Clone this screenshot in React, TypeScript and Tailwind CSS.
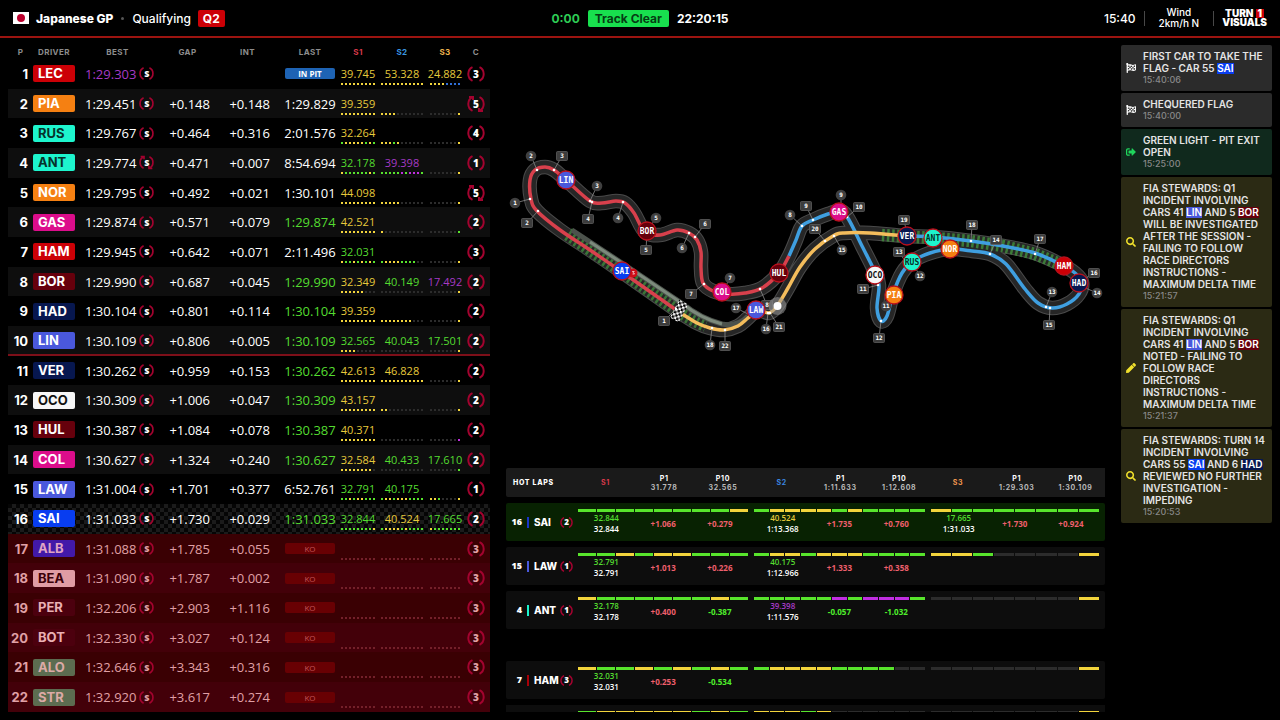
import React from 'react';
import { FaFlagCheckered, FaPen, FaSearch, FaSignOutAlt } from 'react-icons/fa';

type Point = [number, number];

const teamPill: Record<string, string> = {
  LEC: 'bg-[#cc0006] text-white',
  HAM: 'bg-[#cc0006] text-white',
  PIA: 'bg-[#f58012] text-white',
  NOR: 'bg-[#f58012] text-white',
  RUS: 'bg-[#1df5cd] text-[#06332b]',
  ANT: 'bg-[#1df5cd] text-[#06332b]',
  GAS: 'bg-[#dc0d8b] text-white',
  COL: 'bg-[#dc0d8b] text-white',
  BOR: 'bg-[#66000c] text-white',
  HUL: 'bg-[#66000c] text-white',
  HAD: 'bg-[#07174f] text-white',
  VER: 'bg-[#07174f] text-white',
  LIN: 'bg-[#4a58dc] text-white',
  LAW: 'bg-[#4a58dc] text-white',
  OCO: 'bg-[#f7f7f7] text-[#111]',
  SAI: 'bg-[#083df0] text-white',
  ALB: 'bg-[#4219a8] text-[#dfa3c4]',
  BEA: 'bg-[#e09ca4] text-[#3c0008]',
  PER: 'bg-[#4c000e] text-[#eab0b4]',
  BOT: 'bg-[#4c000e] text-[#eab0b4]',
  ALO: 'bg-[#5c6c50] text-[#dcaaa6]',
  STR: 'bg-[#5c6c50] text-[#dcaaa6]'
};

const dotColor: Record<string, string> = {
  y: 'bg-[#f2d43c]',
  g: 'bg-[#58e42c]',
  p: 'bg-[#c02ee0]',
  b: 'bg-[#2f6fd8]',
  '-': 'bg-[#2c2c2c]',
  k: 'bg-[#74202a]'
};

const timeColor: Record<string, string> = {
  y: 'text-[#e6ca3c]',
  g: 'text-[#54dc30]',
  p: 'text-[#a63ac6]',
  w: 'text-white'
};

const none = ['---------', '-----------', '-------y'];

// sectors: colour letter followed by the time; dots: one letter per mini sector
const drivers = [
  { code: 'LEC', best: '1:29.303', gap: '', int: '', last: 'PIT', sectors: ['y39.745', 'y53.328', 'y24.882'], dots: ['yyyyyyyyy', 'yyyyyyyyyyy', 'yyyybbbb'], stint: 3 },
  { code: 'PIA', best: '1:29.451', gap: '+0.148', int: '+0.148', last: 'w1:29.829', sectors: ['y39.359', '', ''], dots: ['yyyyyyyyy', 'yyyy-------', '-------y'], stint: 5, worn: true },
  { code: 'RUS', best: '1:29.767', gap: '+0.464', int: '+0.316', last: 'w2:01.576', sectors: ['y32.264', '', ''], dots: ['gyyyyygyg', 'yyygy------', '-------y'], stint: 4 },
  { code: 'ANT', best: '1:29.774', gap: '+0.471', int: '+0.007', last: 'w8:54.694', sectors: ['g32.178', 'p39.398', ''], dots: ['yggggggyg', 'gggggpgpppg', '-------y'], stint: 1, bestWorn: true },
  { code: 'NOR', best: '1:29.795', gap: '+0.492', int: '+0.021', last: 'w1:30.101', sectors: ['y44.098', '', ''], dots: ['yyyyyyyyy', 'yyyyy------', '-------y'], stint: 5, worn: true },
  { code: 'GAS', best: '1:29.874', gap: '+0.571', int: '+0.079', last: 'g1:29.874', sectors: ['y42.521', '', ''], dots: ['yyyyyyyyy', 'y----------', '-------g'], stint: 2 },
  { code: 'HAM', best: '1:29.945', gap: '+0.642', int: '+0.071', last: 'w2:11.496', sectors: ['g32.031', '', ''], dots: ['yggygygyg', 'gyyyygggg--', '-------y'], stint: 3 },
  { code: 'BOR', best: '1:29.990', gap: '+0.687', int: '+0.045', last: 'g1:29.990', sectors: ['y32.349', 'g40.149', 'p17.492'], dots: ['yyyyyy---', '-----------', '-------y'], stint: 2 },
  { code: 'HAD', best: '1:30.104', gap: '+0.801', int: '+0.114', last: 'g1:30.104', sectors: ['y39.359', '', ''], dots: ['yyyyyyyyy', 'yyyyyyyy---', '-------y'], stint: 2 },
  { code: 'LIN', best: '1:30.109', gap: '+0.806', int: '+0.005', last: 'g1:30.109', sectors: ['g32.565', 'g40.043', 'g17.501'], dots: ['yyyy-----', '-----------', '-------y'], stint: 2 },
  { code: 'VER', best: '1:30.262', gap: '+0.959', int: '+0.153', last: 'g1:30.262', sectors: ['y42.613', 'y46.828', ''], dots: ['yyyyyyyyy', 'yyyyyyyyyyy', '-------y'], stint: 2 },
  { code: 'OCO', best: '1:30.309', gap: '+1.006', int: '+0.047', last: 'g1:30.309', sectors: ['y43.157', '', ''], dots: ['yyyyyyyyy', 'yy---------', '-------y'], stint: 2 },
  { code: 'HUL', best: '1:30.387', gap: '+1.084', int: '+0.078', last: 'g1:30.387', sectors: ['y40.371', '', ''], dots: ['yyyyyyyyy', '-----------', '-------p'], stint: 2 },
  { code: 'COL', best: '1:30.627', gap: '+1.324', int: '+0.240', last: 'g1:30.627', sectors: ['y32.584', 'g40.433', 'g17.610'], dots: ['yyyyyyyy-', '-----------', '-------g'], stint: 2 },
  { code: 'LAW', best: '1:31.004', gap: '+1.701', int: '+0.377', last: 'w6:52.761', sectors: ['g32.791', 'g40.175', ''], dots: ['ggygyyggg', 'gyygyyygggg', 'yyg----y'], stint: 1 },
  { code: 'SAI', best: '1:31.033', gap: '+1.730', int: '+0.029', last: 'g1:31.033', sectors: ['g32.844', 'y40.524', 'g17.665'], dots: ['ggggggggy', 'gyyyygygggg', 'yggggggg'], stint: 2 },
  { code: 'ALB', best: '1:31.088', gap: '+1.785', int: '+0.055', last: 'KO', sectors: ['', '', ''], dots: none, stint: 3 },
  { code: 'BEA', best: '1:31.090', gap: '+1.787', int: '+0.002', last: 'KO', sectors: ['', '', ''], dots: none, stint: 3 },
  { code: 'PER', best: '1:32.206', gap: '+2.903', int: '+1.116', last: 'KO', sectors: ['', '', ''], dots: none, stint: 3 },
  { code: 'BOT', best: '1:32.330', gap: '+3.027', int: '+0.124', last: 'KO', sectors: ['', '', ''], dots: none, stint: 3 },
  { code: 'ALO', best: '1:32.646', gap: '+3.343', int: '+0.316', last: 'KO', sectors: ['', '', ''], dots: none, stint: 3 },
  { code: 'STR', best: '1:32.920', gap: '+3.617', int: '+0.274', last: 'KO', sectors: ['', '', ''], dots: none, stint: 3 }
];

function Tyre({ label, size, worn }: { label: string | number; size: string; worn?: boolean }) {
  return (
    <span className={`inline-grid place-items-center ${size}`}>
      <svg viewBox="0 0 18 18" className="w-full h-full [grid-area:1/1]" fill="none" stroke="#a3032f" strokeWidth="2">
        <path d="M5.5 2.2A7.6 7.6 0 0 0 5.5 15.8" />
        <path d="M12.5 2.2A7.6 7.6 0 0 1 12.5 15.8" />
        {worn && <path d="M2 2h4v3M16 16h-4v-3" />}
      </svg>
      <span className="[grid-area:1/1] leading-none">{label}</span>
    </span>
  );
}

function Sector({ time, dots, ko }: { time: string; dots: string; ko: boolean }) {
  return (
    <div className="flex flex-col items-center pt-1">
      <div className={`h-[14px] text-[11px] leading-[14px] font-medium ${timeColor[time[0]] ?? ''}`}>{time.slice(1)}</div>
      <div className="flex gap-[2px] mt-[2px]">
        {dots.split('').map((d, i) => (
          <span key={i} className={`w-[2px] h-[2px] ${dotColor[ko ? 'k' : d]}`} />
        ))}
      </div>
    </div>
  );
}

function TimingTable() {
  const head = 'p-0 pt-[7px] font-bold';
  return (
    <table className="w-[482px] shrink-0 h-full table-fixed border-collapse text-white font-['Open_Sans',sans-serif]">
      <colgroup>
        <col className="w-[25px]" />
        <col className="w-[42px]" />
        <col className="w-[85px]" />
        <col className="w-[55px]" />
        <col className="w-[65px]" />
        <col className="w-[60px]" />
        <col className="w-[36px]" />
        <col className="w-[52px]" />
        <col className="w-[34px]" />
        <col className="w-[28px]" />
      </colgroup>
      <thead>
        <tr className="h-[21px] text-[8px] leading-[14px] tracking-wider text-[#8d8d8d] font-['Inter',sans-serif]">
          <th className={head}>P</th>
          <th className={head}>DRIVER</th>
          <th className={head}>BEST</th>
          <th className={head}>GAP</th>
          <th className={head}>INT</th>
          <th className={head}>LAST</th>
          <th className={`${head} text-[#d8394a]`}>S1</th>
          <th className={`${head} text-[#3a96e0]`}>S2</th>
          <th className={`${head} text-[#f0b64e]`}>S3</th>
          <th className={head}>C</th>
        </tr>
      </thead>
      <tbody>
        {drivers.map((d, i) => {
          const ko = d.last === 'KO';
          let bg = i % 2 ? 'bg-[#0e0e0e]' : 'bg-black';
          if (ko) bg = i % 2 ? 'bg-[#430009] text-[#e0a0a6]' : 'bg-[#3a0003] text-[#e0a0a6]';
          if (d.code === 'SAI') bg = 'bg-[repeating-conic-gradient(#1b1b1b_0_25%,#050505_0_50%)] bg-[length:8px_8px]';
          return (
            <tr key={d.code} className={`${bg} ${i === 9 ? 'shadow-[inset_0_-2px_#7d0f19]' : ''}`}>
              <td className="p-0 pr-[5px] text-right text-[13px] leading-4 font-bold font-['Inter',sans-serif]">{i + 1}</td>
              <td className="p-0">
                <div className={`h-[17px] pl-[5px] rounded-xs text-[13px] leading-[17px] font-bold font-['Inter',sans-serif] ${teamPill[d.code]}`}>
                  {d.code}
                </div>
              </td>
              <td className="p-0">
                <div className={`flex items-center gap-[3px] pl-[10px] text-[13px] leading-4 font-medium ${i === 0 ? 'text-[#a63ac6]' : ''}`}>
                  {d.best}
                  <span className={`flex text-[9px] font-extrabold ${ko ? 'text-[#e0a0a6]' : 'text-white'}`}>
                    <Tyre label="S" size="w-[15px] h-[15px]" worn={d.bestWorn} />
                  </span>
                </div>
              </td>
              <td className="p-0 pr-[5px] text-right text-[13px] leading-4 font-medium">{d.gap}</td>
              <td className="p-0 pr-[10px] text-right text-[13px] leading-4 font-medium">{d.int}</td>
              <td className="p-0 text-center">
                {d.last === 'PIT' && (
                  <div className="mx-[5px] h-[11px] rounded-xs bg-[#1e63b4] text-[8px] leading-[11px] font-bold">IN PIT</div>
                )}
                {ko && <div className="mx-[5px] h-[11px] rounded-xs bg-[#680003] text-[8px] leading-[11px] text-[#c05458]">KO</div>}
                {!ko && d.last !== 'PIT' && (
                  <div className={`text-[13px] leading-4 font-medium ${timeColor[d.last[0]]}`}>{d.last.slice(1)}</div>
                )}
              </td>
              {d.sectors.map((s, n) => (
                <td key={n} className="p-0">
                  <Sector time={s} dots={d.dots[n]} ko={ko} />
                </td>
              ))}
              <td className="p-0">
                <div className="flex justify-center text-[10px] font-extrabold">
                  <Tyre label={d.stint} size="w-[18px] h-[18px]" worn={d.worn} />
                </div>
              </td>
            </tr>
          );
        })}
      </tbody>
    </table>
  );
}

// ---- circuit map ----

const sector1: Point[] = [
  [679, 312], [652, 293], [622, 272], [590, 250], [560, 230], [537, 211], [531, 199], [530, 180], [535, 170], [545, 167], [554, 170],
  [566, 180], [590, 201], [602, 203], [616, 201], [625, 203], [634, 213], [645, 232], [660, 235], [677, 230], [689, 233], [697, 240],
  [701, 252], [701, 268], [703, 283], [713, 291], [728, 294], [745, 293], [762, 288], [779, 273], [789, 256]
];
const sector2: Point[] = [
  [789, 256], [796, 240], [802, 226], [813, 220], [828, 214], [841, 211], [849, 220], [862, 246], [874, 270], [879, 285], [877, 308],
  [881, 321], [887, 316], [893, 294], [902, 273], [913, 261], [930, 253], [950, 249], [972, 251], [990, 254], [1006, 264], [1025, 289],
  [1038, 303], [1052, 308], [1067, 304], [1079, 294], [1082, 282], [1075, 273], [1062, 265], [1035, 253], [1003, 246], [971, 241],
  [934, 237], [905, 236]
];
const sector3: Point[] = [
  [905, 236], [870, 233], [844, 233], [833, 236], [815, 249], [800, 267], [788, 288], [777, 306], [769, 313], [758, 310], [748, 318],
  [738, 326], [724, 330], [710, 328], [697, 323], [679, 312]
];

// Catmull-Rom spline through the points, written as cubic beziers
function smooth(pts: Point[]) {
  let d = `M${pts[0][0]} ${pts[0][1]}`;
  for (let i = 0; i < pts.length - 1; i++) {
    const a = pts[i - 1] ?? pts[i];
    const b = pts[i];
    const c = pts[i + 1];
    const e = pts[i + 2] ?? c;
    d += `C${b[0] + (c[0] - a[0]) / 6} ${b[1] + (c[1] - a[1]) / 6} ${c[0] - (e[0] - b[0]) / 6} ${c[1] - (e[1] - b[1]) / 6} ${c[0]} ${c[1]}`;
  }
  return d;
}

const outline = smooth([...sector1, ...sector2.slice(1), ...sector3.slice(1)]);

// label, marker x/y, track x/y
const corners: [string, number, number, number, number][] = [
  ['1', 515, 203, 530, 199], ['2', 531, 156, 537, 170], ['3', 597, 186, 590, 201], ['4', 618, 218, 623, 202],
  ['5', 656, 218, 647, 231], ['6', 682, 248, 689, 233], ['7', 730, 278, 722, 293], ['8', 790, 215, 802, 226],
  ['9', 841, 195, 841, 211], ['11', 886, 306, 893, 294], ['12', 920, 276, 912, 262], ['13', 1052, 292, 1046, 307],
  ['14', 1097, 293, 1081, 286], ['15', 842, 250, 834, 236], ['16', 766, 329, 768, 313], ['17', 736, 308, 750, 315],
  ['18', 710, 345, 712, 328]
];

const posts: [string, number, number, number, number][] = [
  ['1', 664, 321, 676, 309], ['2', 527, 223, 538, 211], ['3', 562, 156, 554, 170], ['4', 588, 219, 592, 202],
  ['5', 646, 250, 647, 232], ['6', 705, 224, 695, 237], ['7', 691, 294, 704, 284], ['8', 767, 305, 760, 289],
  ['9', 806, 206, 813, 220], ['10', 859, 207, 847, 217], ['11', 863, 289, 878, 285], ['12', 879, 338, 881, 321],
  ['13', 899, 252, 907, 264], ['14', 996, 240, 990, 254], ['15', 1049, 325, 1050, 308], ['16', 1094, 273, 1081, 281],
  ['17', 1040, 239, 1035, 254], ['18', 972, 225, 971, 241], ['19', 904, 220, 907, 234], ['20', 815, 229, 825, 241],
  ['21', 779, 327, 770, 313], ['22', 725, 346, 725, 330]
];

const cars: [string, number, number, string, string][] = [
  ['LIN', 566, 180, '#4a58dc', '#fff'], ['BOR', 647, 231, '#66000c', '#fff'], ['SAI', 622, 271, '#083df0', '#fff'],
  ['COL', 722, 292, '#dc0d8b', '#fff'], ['HUL', 779, 273, '#66000c', '#fff'], ['LAW', 756, 310, '#4a58dc', '#fff'],
  ['GAS', 839, 212, '#dc0d8b', '#fff'], ['OCO', 875, 275, '#f7f7f7', '#111'], ['PIA', 894, 295, '#f58012', '#fff'],
  ['RUS', 912, 262, '#1df5cd', '#06332b'], ['VER', 907, 236, '#07174f', '#fff'], ['NOR', 950, 249, '#f58012', '#fff'],
  ['ANT', 933, 238, '#1df5cd', '#06332b'], ['HAD', 1079, 283, '#07174f', '#fff'], ['HAM', 1064, 266, '#cc0006', '#fff']
];

function TrackMap() {
  return (
    <svg viewBox="506 38 599 430" className="flex-1 min-h-0 w-full" fill="none" fontFamily="'DejaVu Sans Mono', monospace" fontWeight="700" textAnchor="middle">
      <defs>
        <pattern id="chequer" width="5" height="5" patternUnits="userSpaceOnUse">
          <rect width="5" height="5" fill="#000" />
          <rect width="2.5" height="2.5" fill="#fff" />
          <rect x="2.5" y="2.5" width="2.5" height="2.5" fill="#fff" />
        </pattern>
      </defs>
      <path d={outline} stroke="#4a4a4a" strokeWidth="14.5" />
      <path d={outline} stroke="#262626" strokeWidth="12.5" />

      {/* pit lane and DRS zones */}
      <path d="M568 234L618 268L672 306Q692 320 706 325" stroke="#3f8a3c" strokeWidth="14" strokeDasharray="2.5 2.5" strokeOpacity=".8" />
      <path d="M572 230L625 265L683 304Q700 318 722 324Q738 327 748 316" stroke="#4c524c" strokeWidth="5" />
      <path d="M590 242L625 265L683 304Q700 318 722 324" stroke="#7c8a7c" strokeWidth="3" />
      <path d="M882 235L934 238L971 241L1003 246L1035 254L1060 264" stroke="#3f8a3c" strokeWidth="12.5" strokeDasharray="2.5 2.5" strokeOpacity=".85" />

      <path d={smooth(sector1)} stroke="#d8404c" strokeWidth="3.5" />
      <path d={smooth(sector2)} stroke="#3f9fe0" strokeWidth="3.5" />
      <path d={smooth(sector3)} stroke="#f4bd5c" strokeWidth="3.5" />
      <rect x="674" y="301" width="10" height="20" fill="url(#chequer)" transform="rotate(28 679 311)" />

      {[...corners, ...posts].map(([label, x, y, tx, ty], i) => (
        <g key={i}>
          <path d={`M${x} ${y}L${tx} ${ty}`} stroke="#8a8a8a" strokeWidth=".8" />
          <circle cx={tx} cy={ty} r="1.3" fill="#fff" />
          {i < corners.length ? (
            <circle cx={x} cy={y} r="5.3" fill="#404040" />
          ) : (
            <rect x={x - 5.5} y={y - 4.5} width="11" height="9" rx="1" fill="#3c3c3c" stroke="#5c5c5c" strokeWidth=".8" />
          )}
          <text x={x} y={y + 2} fontSize="6" fill="#fff">{label}</text>
        </g>
      ))}

      <circle cx="633" cy="273" r="4.5" fill="#d00c18" />
      <path d="M634.5 271.5h-2l2 2.5h-2" stroke="#fff" strokeWidth=".7" />
      <circle cx="777.5" cy="306" r="9" fill="#9a9a9a" fillOpacity=".55" />
      <circle cx="777.5" cy="306" r="4" fill="#fff" />

      {cars.map(([code, x, y, fill, ink]) => (
        <g key={code}>
          <circle cx={x} cy={y} r="9" fill={fill} stroke="#b8101c" strokeWidth="1.3" />
          <text x={x} y={y + 3} fontSize="8" fill={ink}>{code}</text>
        </g>
      ))}
    </svg>
  );
}

// ---- hot laps ----

// each sector: mini sectors, time, total, delta to P1, delta to P10
const hotLaps = [
  {
    pos: 16, code: 'SAI', stint: 2, bar: 'bg-[#1a35c8]', bg: 'bg-[#082202]',
    sectors: [
      ['ggggggggy', 'g32.844', '32.844', '+1.066', '+0.279'],
      ['gyyyygygggg', 'y40.524', '1:13.368', '+1.735', '+0.760'],
      ['yggggggg', 'g17.665', '1:31.033', '+1.730', '+0.924']
    ]
  },
  {
    pos: 15, code: 'LAW', stint: 1, bar: 'bg-[#4a58dc]', bg: 'bg-[#0d0d0d]',
    sectors: [
      ['ggygyyggg', 'g32.791', '32.791', '+1.013', '+0.226'],
      ['gyygyyygggg', 'g40.175', '1:12.966', '+1.333', '+0.358'],
      ['yyg----y', '', '', '', '']
    ]
  },
  {
    pos: 4, code: 'ANT', stint: 1, bar: 'bg-[#1df5cd]', bg: 'bg-[#0d0d0d]',
    sectors: [
      ['yggggggyg', 'g32.178', '32.178', '+0.400', '-0.387'],
      ['gggggpgpppg', 'p39.398', '1:11.576', '-0.057', '-1.032'],
      ['-------y', '', '', '', '']
    ]
  },
  {
    pos: 7, code: 'HAM', stint: 3, bar: 'bg-[#a80008]', bg: 'bg-[#0d0d0d]',
    sectors: [
      ['yggygygyg', 'g32.031', '32.031', '+0.253', '-0.534'],
      ['gyyyygggg--', '', '', '', ''],
      ['-------y', '', '', '', '']
    ]
  }
];

const bestSplits = [
  { name: 'S1', color: 'text-[#d8394a]', p1: '31.778', p10: '32.565' },
  { name: 'S2', color: 'text-[#3a86e0]', p1: '1:11.633', p10: '1:12.608' },
  { name: 'S3', color: 'text-[#f0964e]', p1: '1:29.303', p10: '1:30.109' }
];

function SegmentBar({ dots }: { dots: string }) {
  return (
    <div className="flex gap-px h-[3px]">
      {dots.split('').map((d, i) => (
        <span key={i} className={`flex-1 ${dotColor[d]}`} />
      ))}
    </div>
  );
}

function Delta({ value }: { value: string }) {
  return <div className={`font-bold ${value[0] === '-' ? 'text-[#4ff02c]' : 'text-[#ee5f6c]'}`}>{value}</div>;
}

function HotLaps() {
  return (
    <div className="h-[244px] shrink-0 overflow-hidden">
      <table className="w-full table-fixed border-separate border-spacing-0 text-white font-['Open_Sans',sans-serif]">
        <colgroup>
          <col className="w-[70px]" />
          <col span={9} />
        </colgroup>
        <thead>
          <tr className="h-[29px] text-[7px] leading-[9px] tracking-widest font-['Inter',sans-serif]">
            <th className="p-0 pl-[7px] text-left bg-[#1a1a1a] whitespace-nowrap font-extrabold rounded-l-xs">HOT LAPS</th>
            {bestSplits.map((s) => (
              <React.Fragment key={s.name}>
                <th className={`p-0 bg-[#1a1a1a] ${s.color}`}>{s.name}</th>
                <th className="p-0 bg-[#1a1a1a]">P1<div className="text-[#b8b8b8]">{s.p1}</div></th>
                <th className="p-0 bg-[#1a1a1a]">P10<div className="text-[#b8b8b8]">{s.p10}</div></th>
              </React.Fragment>
            ))}
          </tr>
        </thead>
        {hotLaps.map((h) => (
          <tbody key={h.code}>
            <tr className={h.code === 'HAM' ? 'h-8' : 'h-[6px]'}><td colSpan={10} className="p-0" /></tr>
            <tr className="h-[38px]">
              <td className={`p-0 ${h.bg} rounded-l-xs`}>
                <div className="flex items-center font-extrabold">
                  <span className="w-4 text-right text-[9px]">{h.pos}</span>
                  <span className={`w-[2px] h-[11px] mx-[5px] ${h.bar}`} />
                  <span className="w-[26px] text-[10px] font-['Inter',sans-serif]">{h.code}</span>
                  <span className="flex text-[8px]">
                    <Tyre label={h.stint} size="w-[13px] h-[13px]" />
                  </span>
                </div>
              </td>
              {h.sectors.map(([dots, time, total, p1, p10], n) => (
                <td key={n} colSpan={3} className={`p-0 pl-[2px] pr-1 pt-[6px] align-top ${h.bg} last:pr-[6px] last:rounded-r-xs`}>
                  <SegmentBar dots={dots} />
                  <div className="grid grid-cols-3 items-center text-center text-[8px] leading-[11px]">
                    <div>
                      <div className={`font-semibold ${timeColor[time[0]] ?? ''}`}>{time.slice(1)}</div>
                      <div className="font-semibold">{total}</div>
                    </div>
                    <Delta value={p1} />
                    <Delta value={p10} />
                  </div>
                </td>
              ))}
            </tr>
          </tbody>
        ))}
        <tbody>
          <tr className="h-[6px]"><td colSpan={10} className="p-0" /></tr>
          <tr className="h-[38px]">
            <td className="p-0 bg-[#0d0d0d]" />
            {['gyyyyygyg', 'yyygy------', '-------y'].map((dots, n) => (
              <td key={n} colSpan={3} className="p-0 pl-[2px] pr-1 pt-[6px] align-top bg-[#0d0d0d] last:pr-[6px]">
                <SegmentBar dots={dots} />
              </td>
            ))}
          </tr>
        </tbody>
      </table>
    </div>
  );
}

// ---- race control ----

function Tag({ code }: { code: string }) {
  return <span className={`inline-block h-[11px] leading-[11px] ${teamPill[code]}`}>{code}</span>;
}

const grey = 'bg-[#2b2b2b]';
const olive = 'bg-[#2b2a14]';

const messages = [
  { time: '15:40:06', bg: grey, icon: <FaFlagCheckered className="text-white" />, text: <>FIRST CAR TO TAKE THE FLAG - CAR 55 <Tag code="SAI" /></> },
  { time: '15:40:00', bg: grey, icon: <FaFlagCheckered className="text-white" />, text: <>CHEQUERED FLAG</> },
  { time: '15:25:00', bg: 'bg-[#10291d]', icon: <FaSignOutAlt className="text-[#1fd65c]" />, text: <>GREEN LIGHT - PIT EXIT OPEN</> },
  { time: '15:21:57', bg: olive, icon: <FaSearch className="text-[#f0e02c]" />, text: <>FIA STEWARDS: Q1 INCIDENT INVOLVING CARS 41 <Tag code="LIN" /> AND 5 <Tag code="BOR" /> WILL BE INVESTIGATED AFTER THE SESSION - FAILING TO FOLLOW RACE DIRECTORS INSTRUCTIONS - MAXIMUM DELTA TIME</> },
  { time: '15:21:37', bg: olive, icon: <FaPen className="text-[#f0e02c]" />, text: <>FIA STEWARDS: Q1 INCIDENT INVOLVING CARS 41 <Tag code="LIN" /> AND 5 <Tag code="BOR" /> NOTED - FAILING TO FOLLOW RACE DIRECTORS INSTRUCTIONS - MAXIMUM DELTA TIME</> },
  { time: '15:20:53', bg: olive, icon: <FaSearch className="text-[#f0e02c]" />, text: <>FIA STEWARDS: TURN 14 INCIDENT INVOLVING CARS 55 <Tag code="SAI" /> AND 6 <Tag code="HAD" /> REVIEWED NO FURTHER INVESTIGATION - IMPEDING</> }
];

function RaceControl() {
  return (
    <ul className="w-[151px] shrink-0 flex flex-col gap-[2px] pt-[7px] text-[10px] leading-3 text-[#e4e4e4] font-semibold">
      {messages.map((m) => (
        <li key={m.time} className={`flex items-center py-[5px] pr-[6px] rounded-xs ${m.bg}`}>
          <span className="w-[22px] pl-[5px] shrink-0">{m.icon}</span>
          <div>
            <p>{m.text}</p>
            <time className="block text-[9px] font-medium text-[#878787]">{m.time}</time>
          </div>
        </li>
      ))}
    </ul>
  );
}

export default function App() {
  return (
    <div className="h-screen flex flex-col bg-black text-white font-['Inter',sans-serif] overflow-hidden">
      <header className="h-[38px] shrink-0 grid grid-cols-[1fr_auto_1fr] items-center px-[13px] border-b-2 border-[#9c1410] text-xs leading-[17px]">
        <div className="flex items-center">
          <span className="w-4 h-3 bg-white flex items-center justify-center mr-[7px]">
            <span className="w-2 h-2 rounded-full bg-[#bc002d]" />
          </span>
          <h1 className="font-extrabold">Japanese GP</h1>
          <span className="w-[3px] h-[3px] mx-2 rounded-full bg-[#555]" />
          <span className="font-medium">Qualifying</span>
          <span className="ml-[7px] px-[5px] rounded-xs bg-[#cc0006] font-bold">Q2</span>
        </div>
        <div className="flex items-center gap-2 font-bold">
          <span className="text-[#2ecc55]">0:00</span>
          <span className="px-[7px] rounded-xs bg-[#18e04e] text-[#063c14]">Track Clear</span>
          <span>22:20:15</span>
        </div>
        <div className="flex items-center justify-end">
          <span className="font-medium">15:40</span>
          <span className="w-px h-[15px] ml-2 mr-[14px] bg-[#484848]" />
          <span className="text-[10px] leading-[11px] font-medium text-center">Wind<br />2km/h N</span>
          <span className="w-px h-[15px] ml-[14px] mr-2 bg-[#484848]" />
          <div className="text-[10px] leading-[9px] font-black text-center">
            TURN <span className="inline-block px-[2px] bg-[#cc0006]">1</span>
            <br />
            VISUALS
          </div>
        </div>
      </header>

      <main className="flex-1 min-h-0 flex gap-4 px-2">
        <div className="pb-2 h-full">
          <TimingTable />
        </div>
        <div className="flex-1 min-w-0 flex flex-col pb-2">
          <TrackMap />
          <HotLaps />
        </div>
        <RaceControl />
      </main>
    </div>
  );
}
